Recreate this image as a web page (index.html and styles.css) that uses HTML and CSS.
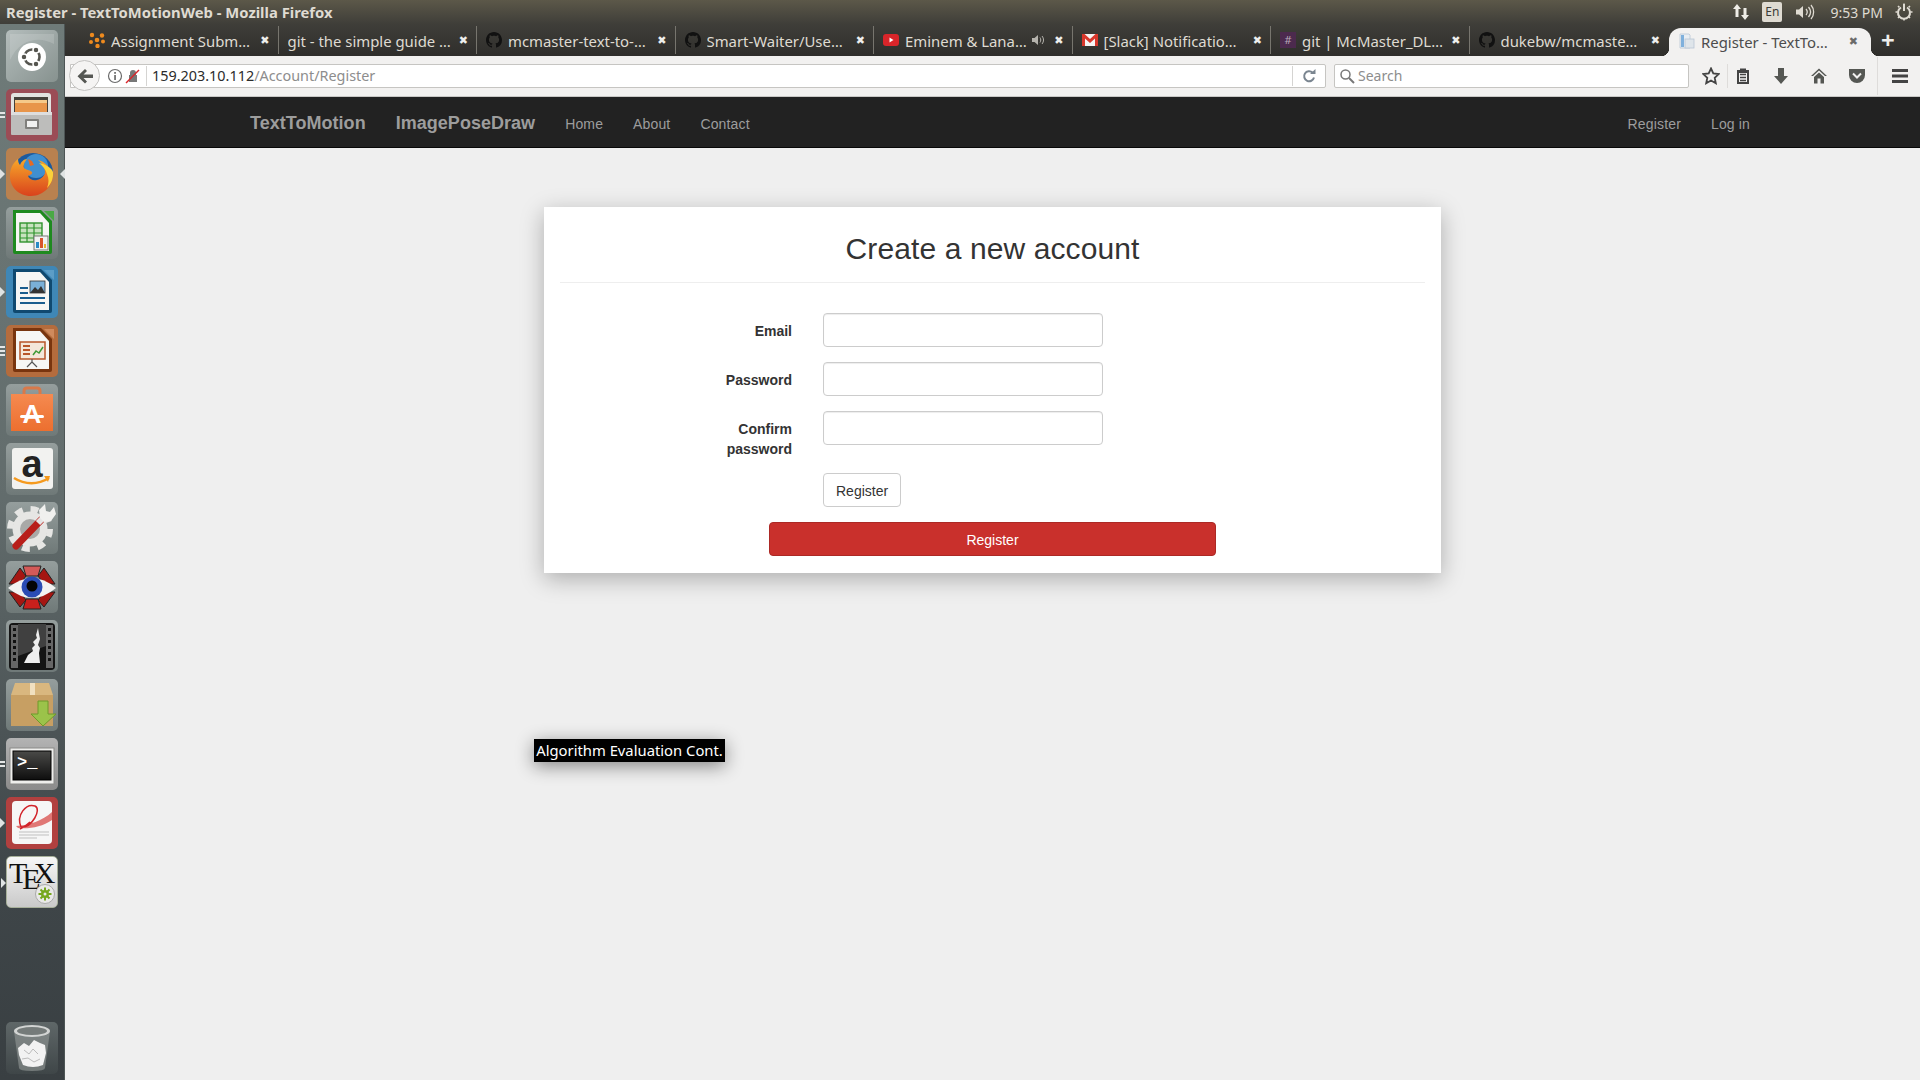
FILE: index.html
```html
<!DOCTYPE html>
<html lang="en">
<head>
  <meta charset="UTF-8">
  <meta name="viewport" content="width=device-width, initial-scale=1.0">
  <title>Register - TextToMotionWeb</title>
  <link rel="stylesheet" href="styles.css">
</head>
<body>

  <svg class="defs" width="0" height="0">
    <defs>
      <symbol id="github" viewBox="0 0 16 16">
        <path d="M8 0C3.58 0 0 3.58 0 8c0 3.54 2.29 6.53 5.47 7.59.4.07.55-.17.55-.38 0-.19-.01-.82-.01-1.49-2.01.37-2.53-.49-2.69-.94-.09-.23-.48-.94-.82-1.13-.28-.15-.68-.52-.01-.53.63-.01 1.08.58 1.23.82.72 1.21 1.87.87 2.33.66.07-.52.28-.87.51-1.07-1.78-.2-3.64-.89-3.64-3.95 0-.87.31-1.59.82-2.15-.08-.2-.36-1.02.08-2.12 0 0 .67-.21 2.2.82.64-.18 1.32-.27 2-.27.68 0 1.36.09 2 .27 1.53-1.04 2.2-.82 2.2-.82.44 1.1.16 1.92.08 2.12.51.56.82 1.27.82 2.15 0 3.07-1.87 3.75-3.65 3.95.29.25.54.73.54 1.48 0 1.07-.01 1.93-.01 2.2 0 .21.15.46.55.38A8.013 8.013 0 0016 8c0-4.42-3.58-8-8-8z" fill="#111"/>
      </symbol>
      <linearGradient id="ffOrange" x1="0" y1="0" x2="0" y2="1">
        <stop offset="0" stop-color="#f7a72a"/>
        <stop offset="1" stop-color="#d9421c"/>
      </linearGradient>
      <linearGradient id="bagOrange" x1="0" y1="0" x2="0" y2="1">
        <stop offset="0" stop-color="#f58a50"/>
        <stop offset="1" stop-color="#ec6f2f"/>
      </linearGradient>
      <linearGradient id="screenDark" x1="0" y1="0" x2="0" y2="1">
        <stop offset="0" stop-color="#4a4a48"/>
        <stop offset="1" stop-color="#0e0e0e"/>
      </linearGradient>
    </defs>
  </svg>

  <!-- Ubuntu panel -->
  <div class="panel">
    <span class="panel-title">Register - TextToMotionWeb - Mozilla Firefox</span>
    <div class="indicators">
      <svg class="ind-arrows" width="18" height="18" viewBox="0 0 18 18">
        <path d="M5 1l4 5H6.500v8h-3V6H1zM13 17l-4-5h2.500V5h3v7H17z" fill="#eeece6"/>
      </svg>
      <span class="ind-lang">En</span>
      <svg class="ind-volume" width="20" height="18" viewBox="0 0 20 18">
        <path d="M1 6.500h3L8 3v12l-4-3.500H1z" fill="#dfdbd2"/>
        <path d="M11 6c1.500 1.800 1.500 4.200 0 6M13.500 4c2.500 3 2.500 7 0 10M16 2c3.500 4 3.500 10 0 14" fill="none" stroke="#dfdbd2" stroke-width="1.300"/>
      </svg>
      <span class="ind-time">9:53 PM</span>
      <svg class="ind-power" width="18" height="18" viewBox="0 0 18 18">
        <path d="M6 4.500a6 6 0 1 0 6 0" fill="none" stroke="#dfdbd2" stroke-width="2"/>
        <path d="M9 1v7" stroke="#dfdbd2" stroke-width="2"/>
        <path d="M9 .5v2M9 15.500v2M.500 9h2M15.500 9h2M3 3l1.400 1.400M15 3l-1.400 1.400M3 15l1.400-1.400M15 15l-1.400-1.400" stroke="#dfdbd2" stroke-width="1.600"/>
      </svg>
    </div>
  </div>

  <div class="desktop">

    <!-- Launcher -->
    <div class="launcher">

      <div class="tile tile-dash">
        <svg viewBox="0 0 52 52">
          <path d="M4 30C14 8 34 6 48 14V4H4z" fill="#fff" opacity=".15"/>
          <circle cx="26" cy="27" r="14" fill="#fff"/>
          <circle cx="26" cy="27" r="7.500" fill="none" stroke="#55554f" stroke-width="2.600"/>
          <circle cx="30" cy="20" r="3" fill="#55554f" stroke="#fff" stroke-width="1.500"/>
          <circle cx="30" cy="34" r="3" fill="#55554f" stroke="#fff" stroke-width="1.500"/>
          <circle cx="18" cy="27" r="3" fill="#55554f" stroke="#fff" stroke-width="1.500"/>
        </svg>
      </div>

      <div class="tile tile-files">
        <span class="pip pip-double"></span>
        <svg viewBox="0 0 52 52">
          <path d="M5 7q0-3 3-3h34q3 0 3 3v16H5z" fill="#e2e2e0"/>
          <rect x="8" y="8" width="34" height="15" fill="#45403a"/>
          <rect x="9" y="11" width="32" height="3" fill="#f5c98a"/>
          <rect x="9" y="14" width="32" height="9" fill="#e8954a"/>
          <rect x="5" y="23" width="41" height="23" rx="1" fill="#bdbdbb"/>
          <rect x="5" y="23" width="41" height="3" fill="#dedede"/>
          <rect x="19" y="30" width="14" height="10" rx="1" fill="#807f7c"/>
          <rect x="21" y="32" width="10" height="6" fill="#f1f1f0"/>
        </svg>
      </div>

      <div class="tile tile-firefox">
        <span class="pip pip-arrow"></span>
        <span class="pip pip-arrow-right"></span>
        <svg viewBox="0 0 52 52">
          <circle cx="27" cy="25" r="20" fill="#1c5a9e"/>
          <circle cx="30" cy="18" r="12" fill="#3f8fd0"/>
          <path d="M47 24c1 13-9 24-22 24C12 48 3 38 4 26c.5-7 4-12 8-15 0 3 1 5 2 6 1-3 4-6 7-6-3 4-4 7-3 9 2 2 6 2 8 4 1 2-2 3-4 4 1 3 5 5 9 4 5-1 8-5 8-8 0-5-3-9-7-12 6 1 14 8 15 16z" fill="url(#ffOrange)"/>
          <path d="M47 24c.5 7-2 12-6 16 2-5 2-9 0-14-1-4-4-8-8-11 6 1 13 5 14 9z" fill="#fbd13a"/>
          <path d="M22 11l4 2 2 4-4 1z" fill="#e66a24"/>
        </svg>
      </div>

      <div class="tile tile-grey">
        <svg viewBox="0 0 52 52">
          <path d="M38 4h10v10z" fill="#49a945"/>
          <path d="M7 3h28l11 11v31q0 2-2 2H9q-2 0-2-2z" fill="#1e8a1f"/>
          <path d="M10 6h24l9 10v28H10z" fill="#f6f6f4"/>
          <rect x="14" y="16" width="22" height="19" fill="#c8e2bf" stroke="#2f932d" stroke-width="1.400"/>
          <path d="M14 21h22M14 26h22M14 31h22M21 16v19M28 16v19" stroke="#2f932d" stroke-width="1.200"/>
          <rect x="28" y="29" width="14" height="14" fill="#f2f2f2" stroke="#777"/>
          <rect x="30" y="35" width="3" height="6" fill="#2b8ac6"/>
          <rect x="34" y="31" width="3" height="10" fill="#d9532b"/>
          <rect x="38" y="37" width="2" height="4" fill="#e7b92e"/>
        </svg>
      </div>

      <div class="tile tile-writer">
        <span class="pip pip-arrow"></span>
        <svg viewBox="0 0 52 52">
          <path d="M38 4h10v10z" fill="#5c9dc7"/>
          <path d="M7 3h28l11 11v31q0 2-2 2H9q-2 0-2-2z" fill="#10496f"/>
          <path d="M10 6h24l9 10v28H10z" fill="#f6f6f4"/>
          <rect x="14" y="21" width="8" height="2" fill="#1a5d8e"/>
          <rect x="14" y="26" width="8" height="2" fill="#1a5d8e"/>
          <rect x="14" y="31" width="25" height="2" fill="#1a5d8e"/>
          <rect x="14" y="36" width="25" height="2" fill="#1a5d8e"/>
          <rect x="24" y="15" width="15" height="12" fill="#7ab0d8" stroke="#333" stroke-width=".8"/>
          <path d="M24 27l5-6 3 3 3-4 4 7z" fill="#333"/>
        </svg>
      </div>

      <div class="tile tile-impress">
        <span class="pip pip-triple"></span>
        <svg viewBox="0 0 52 52">
          <path d="M38 4h10v10z" fill="#cf8a5d"/>
          <path d="M7 3h28l11 11v31q0 2-2 2H9q-2 0-2-2z" fill="#78350f"/>
          <path d="M10 6h24l9 10v28H10z" fill="#f6f6f4"/>
          <rect x="14" y="17" width="25" height="17" fill="#f4e7da" stroke="#b8562a" stroke-width="1.500"/>
          <rect x="17" y="20" width="7" height="2" fill="#b8562a"/>
          <rect x="17" y="24" width="7" height="2" fill="#b8562a"/>
          <rect x="17" y="28" width="7" height="2" fill="#b8562a"/>
          <path d="M27 30l3-4 3 2 4-6" fill="none" stroke="#3d9a35" stroke-width="1.500"/>
          <path d="M26 34v3l-5 5M26 37l5 5" fill="none" stroke="#555" stroke-width="1.200"/>
        </svg>
      </div>

      <div class="tile tile-grey">
        <svg viewBox="0 0 52 52">
          <path d="M18 14V7q0-3 3-3h10q3 0 3 3v7" fill="none" stroke="#d8794a" stroke-width="3"/>
          <path d="M5 10h42v37H5z" fill="url(#bagOrange)"/>
          <text x="26" y="39" class="soft-letter">A</text>
          <rect x="14" y="31" width="24" height="3" rx="1.500" fill="#fff"/>
        </svg>
      </div>

      <div class="tile tile-grey">
        <svg viewBox="0 0 52 52">
          <rect x="6" y="5" width="41" height="41" rx="3" fill="#f2f2f0"/>
          <text x="26" y="34" class="amazon-letter">a</text>
          <path d="M8 35c11 7 24 7 35 0" fill="none" stroke="#f59a1e" stroke-width="2.500"/>
          <path d="M38 33l6 0-2 6z" fill="#f59a1e"/>
        </svg>
      </div>

      <div class="tile tile-grey">
        <svg viewBox="0 0 52 52">
          <circle cx="24" cy="27" r="20" fill="none" stroke="#e6e6e4" stroke-width="6" stroke-dasharray="7.850 7.850"/>
          <circle cx="24" cy="27" r="17.500" fill="#e6e6e4"/>
          <circle cx="24" cy="27" r="10" fill="#a9a9a7"/>
          <path d="M10 44l25-26" stroke="#b81f1a" stroke-width="7" stroke-linecap="round"/>
          <path d="M32 21l6-6" stroke="#e5e5e5" stroke-width="6"/>
          <path d="M34 16l-1-8 6-6 1 7 4 1 4-5 2 7-5 7-7 1z" fill="#f0f0ee"/>
        </svg>
      </div>

      <div class="tile tile-grey">
        <svg viewBox="0 0 52 52">
          <path d="M17 5h18l-3 10H20z" fill="#d45a58" stroke="#222"/>
          <path d="M14 7l-11 16h11l6-8z" fill="#a51612" stroke="#222"/>
          <path d="M38 7l11 16H38l-6-8z" fill="#a51612" stroke="#222"/>
          <path d="M14 31H3l11 15 6-7z" fill="#a51612" stroke="#222"/>
          <path d="M38 31h11L38 46l-6-7z" fill="#a51612" stroke="#222"/>
          <path d="M20 38h12l3 10H17z" fill="#c9201c" stroke="#222"/>
          <path d="M2 27q24-20 48 0q-24 20-48 0z" fill="#f2f2f2"/>
          <circle cx="26" cy="26" r="10.500" fill="#2a4cb4"/>
          <circle cx="26" cy="25" r="5.500" fill="#050505"/>
        </svg>
      </div>

      <div class="tile tile-grey">
        <svg viewBox="0 0 52 52">
          <rect x="3" y="3" width="46" height="47" rx="4" fill="#141414"/>
          <path d="M12 4h28v22L12 36z" fill="#5e5e5e" opacity=".6"/>
          <rect x="5" y="5" width="7" height="43" fill="#666"/>
          <rect x="40" y="5" width="7" height="43" fill="#666"/>
          <path d="M7 8h3v3H7zM7 14h3v3H7zM7 20h3v3H7zM7 26h3v3H7zM7 32h3v3H7zM7 38h3v3H7zM42 8h3v3h-3zM42 14h3v3h-3zM42 20h3v3h-3zM42 26h3v3h-3zM42 32h3v3h-3zM42 38h3v3h-3z" fill="#111"/>
          <path d="M32 8l-2 7 1 3-4 4 2 3-3 3 1 3-5 4-4 8h16l-1-10 1-5-2-3 2-6-1-5z" fill="#eee"/>
        </svg>
      </div>

      <div class="tile tile-grey">
        <svg viewBox="0 0 52 52">
          <path d="M9 4h34l4 12v31H5V16z" fill="#d9b77f"/>
          <path d="M5 16h42v31H5z" fill="#c79f63"/>
          <rect x="24" y="4" width="5" height="12" fill="#f1e0c0"/>
          <path d="M32 22h10v13h8L37 47 25 35h7z" fill="#9bc34a" stroke="#6f9a2a"/>
        </svg>
      </div>

      <div class="tile tile-terminal">
        <span class="pip pip-double"></span>
        <svg viewBox="0 0 52 52">
          <rect x="4" y="10" width="44" height="36" fill="#eeeeec" stroke="#8a8a88"/>
          <rect x="7" y="13" width="38" height="29" fill="url(#screenDark)" stroke="#000"/>
          <text x="11" y="29" class="term-prompt">&gt;_</text>
        </svg>
      </div>

      <div class="tile tile-evince">
        <span class="pip pip-arrow"></span>
        <svg viewBox="0 0 52 52">
          <rect x="6" y="4" width="40" height="43" rx="4" fill="#f6f6f6"/>
          <path d="M46 15C36 24 24 28 10 29l2 2c12 1 24-1 34-8z" fill="#e07775"/>
          <path d="M15 30C10 18 20 6 29 9c7 3-3 22-14 21M14 32c4-2 8-5 10-7" fill="none" stroke="#d2232a" stroke-width="1.500"/>
          <path d="M13 35h30M13 38h30M13 41h18" stroke="#bfbfbf" stroke-width="1"/>
        </svg>
      </div>

      <div class="tile tile-tex">
        <span class="pip pip-arrow"></span>
        <svg viewBox="0 0 52 52">
          <text x="3" y="27" class="tex-big">T<tspan dx="-5" dy="6">E</tspan><tspan dx="-7" dy="-6">X</tspan></text>
          <circle cx="39" cy="38" r="9.500" fill="#e9e9e7" stroke="#aaa"/>
          <path d="M39 31.500v13M32.500 38h13M34.500 33.500l9 9M43.500 33.500l-9 9" stroke="#76a81c" stroke-width="2"/>
          <circle cx="39" cy="38" r="4" fill="#76a81c"/>
          <circle cx="39" cy="38" r="1.500" fill="#e9e9e7"/>
        </svg>
      </div>

      <div class="tile tile-trash">
        <svg viewBox="0 0 52 52">
          <path d="M8 9l5 37q0 3 13 3t13-3l5-37z" fill="#9aa09f" opacity=".55"/>
          <ellipse cx="26" cy="9" rx="18" ry="6" fill="#d2d4d3"/>
          <ellipse cx="26" cy="9" rx="15" ry="4" fill="#757b7a"/>
          <path d="M12 26l6-5 5 3 5-6 6 3 5 2 1 8-3 12q-10 4-20 0l-4-10z" fill="#f2f2f2"/>
          <path d="M18 28l5 4 4-5 5 5M16 37l6-1 6 4 6-3" fill="none" stroke="#bbb"/>
        </svg>
      </div>

    </div>

    <div class="browser">

      <!-- Tabs -->
      <div class="tabstrip">
        <div class="tab">
          <svg class="favicon" viewBox="0 0 16 16">
            <g fill="#ee8a1e">
              <circle cx="8" cy="8" r="2.300"/><circle cx="3" cy="3" r="2.200"/><circle cx="13" cy="3.500" r="2.200"/>
              <circle cx="2" cy="10" r="2"/><circle cx="14" cy="9.500" r="2"/><circle cx="8.500" cy="14" r="2.200"/>
            </g>
          </svg>
          <span class="tab-text">Assignment Subm…</span><span class="tab-close">✖</span>
        </div>
        <div class="tab">
          <span class="tab-text">git - the simple guide …</span><span class="tab-close">✖</span>
        </div>
        <div class="tab">
          <svg class="favicon"><use href="#github"/></svg>
          <span class="tab-text">mcmaster-text-to-…</span><span class="tab-close">✖</span>
        </div>
        <div class="tab">
          <svg class="favicon"><use href="#github"/></svg>
          <span class="tab-text">Smart-Waiter/Use…</span><span class="tab-close">✖</span>
        </div>
        <div class="tab">
          <svg class="favicon" viewBox="0 0 16 16">
            <rect y="2" width="16" height="12" rx="3" fill="#d9252a"/>
            <path d="M6.500 5.500l4 2.500-4 2.500z" fill="#fff"/>
          </svg>
          <span class="tab-text">Eminem &amp; Lana…</span>
          <svg class="tab-audio" width="14" height="14" viewBox="0 0 14 14">
            <path d="M1 5h2.500L7 2v10L3.500 9H1z" fill="#b5b3ad"/>
            <path d="M9 4.500c1 1.500 1 3.500 0 5M11 3c2 2.500 2 5.500 0 8" fill="none" stroke="#b5b3ad"/>
          </svg>
          <span class="tab-close">✖</span>
        </div>
        <div class="tab">
          <svg class="favicon" viewBox="0 0 16 16">
            <rect y="2" width="16" height="12" fill="#f4f4f4"/>
            <path d="M0 2h2.500L8 7l5.500-5H16v12h-3V6.500L8 11 3 6.500V14H0z" fill="#d8372c"/>
          </svg>
          <span class="tab-text">[Slack] Notificatio…</span><span class="tab-close">✖</span>
        </div>
        <div class="tab">
          <span class="favicon favicon-slack">#</span>
          <span class="tab-text">git | McMaster_DL…</span><span class="tab-close">✖</span>
        </div>
        <div class="tab tab-last">
          <svg class="favicon"><use href="#github"/></svg>
          <span class="tab-text">dukebw/mcmaste…</span><span class="tab-close">✖</span>
        </div>
        <div class="tab tab-active">
          <svg class="favicon" viewBox="0 0 16 16">
            <path d="M1 1h9l1 1v13H1z" fill="#e9eef3" stroke="#b8c6d4" stroke-width=".8"/>
            <rect x="2" y="2" width="3" height="12" fill="#7fb0dc"/>
            <rect x="6" y="6" width="9" height="9" fill="#dfe5ea" stroke="#b8c6d4" stroke-width=".8"/>
          </svg>
          <span class="tab-text">Register - TextTo…</span><span class="tab-close">✖</span>
        </div>
        <span class="tab-new">+</span>
      </div>

      <!-- Toolbar -->
      <div class="toolbar">
        <div class="back-button">
          <svg width="18" height="18" viewBox="0 0 18 18">
            <path d="M9 2l2 2-3.500 3.500H17v3.500H7.500L11 14.500l-2 2L1.500 9.200z" fill="#555753"/>
          </svg>
        </div>
        <div class="urlbar">
          <svg class="url-info" width="16" height="16" viewBox="0 0 16 16">
            <circle cx="8" cy="8" r="6.500" fill="none" stroke="#6b6b6b" stroke-width="1.200"/>
            <rect x="7.200" y="7" width="1.700" height="5" fill="#6b6b6b"/>
            <rect x="7.200" y="4" width="1.700" height="1.800" fill="#6b6b6b"/>
          </svg>
          <svg class="url-lock" width="16" height="16" viewBox="0 0 16 16">
            <path d="M5 7V5a3 3 0 0 1 6 0v2h1v7H4V7z" fill="#777"/>
            <path d="M1 15L14 2" stroke="#d9252a" stroke-width="1.500"/>
          </svg>
          <span class="url-sep"></span>
          <span class="url-text"><span class="url-host">159.203.10.112</span>/Account/Register</span>
          <span class="url-sep url-sep-end"></span>
          <svg class="url-reload" width="16" height="16" viewBox="0 0 16 16">
            <path d="M13 9.500a5 5 0 1 1-1.500-5" fill="none" stroke="#7a8590" stroke-width="2"/>
            <path d="M9 6h5.500V1z" fill="#7a8590"/>
          </svg>
        </div>
        <div class="searchbar">
          <svg width="16" height="16" viewBox="0 0 16 16">
            <circle cx="6.500" cy="6.500" r="4.500" fill="none" stroke="#777" stroke-width="1.500"/>
            <path d="M10 10l5 5" stroke="#777" stroke-width="2"/>
          </svg>
          <span>Search</span>
        </div>
        <div class="tool-icons">
          <svg class="tool-star" width="18" height="18" viewBox="0 0 18 18">
            <path d="M9 1.500l2.300 5 5.400.6-4 3.700 1.100 5.400L9 13.500l-4.800 2.700 1.100-5.400-4-3.700 5.400-.6z" fill="none" stroke="#444" stroke-width="1.800"/>
          </svg>
          <span class="tool-sep"></span>
          <svg class="tool-clip" width="16" height="18" viewBox="0 0 16 18">
            <path d="M5 3V1.500h6V3h3v14H2V3z" fill="#444"/>
            <path d="M4 6h8v9H4z" fill="#f2f1f0"/>
            <path d="M5 7.500h6M5 10.500h6M5 13.500h6" stroke="#444" stroke-width="1.500"/>
          </svg>
          <svg class="tool-down" width="16" height="18" viewBox="0 0 16 18">
            <path d="M5 1h6v8h4l-7 8-7-8h4z" fill="#555753"/>
          </svg>
          <svg class="tool-home" width="18" height="18" viewBox="0 0 18 18">
            <path d="M9 1.500L1 9h2l6-5.500L15 9h2z" fill="#555753"/>
            <path d="M9 5.500L4 10v6.500h3.500v-5h3v5H14V10z" fill="#555753"/>
          </svg>
          <svg class="tool-pocket" width="18" height="18" viewBox="0 0 18 18">
            <path d="M1 2h16v6a8 8 0 0 1-16 0z" fill="#555753"/>
            <path d="M5 6.500l4 4 4-4" fill="none" stroke="#f2f1f0" stroke-width="2"/>
          </svg>
          <span class="tool-sep tool-sep-menu"></span>
          <svg class="tool-menu" width="18" height="16" viewBox="0 0 18 16">
            <path d="M1 1h16v3H1zM1 6.500h16v3H1zM1 12h16v3H1z" fill="#444"/>
          </svg>
        </div>
      </div>

      <!-- Site navbar -->
      <nav class="navbar">
        <a class="brand">TextToMotion</a>
        <a class="brand">ImagePoseDraw</a>
        <a>Home</a>
        <a>About</a>
        <a>Contact</a>
        <span class="nav-spacer"></span>
        <a>Register</a>
        <a>Log in</a>
      </nav>

      <!-- Page content -->
      <div class="content">
        <div class="card">
          <h2>Create a new account</h2>
          <hr>
          <form class="register-form">
            <div class="form-row">
              <label class="form-label">Email</label>
              <input class="form-input" type="text">
            </div>
            <div class="form-row">
              <label class="form-label">Password</label>
              <input class="form-input" type="password">
            </div>
            <div class="form-row">
              <label class="form-label">Confirm password</label>
              <input class="form-input" type="password">
            </div>
            <div class="form-row">
              <span class="form-label form-label-empty"></span>
              <button class="btn" type="button">Register</button>
            </div>
          </form>
          <button class="btn btn-red" type="button">Register</button>
        </div>
      </div>

    </div>
  </div>

  <div class="tooltip">Algorithm Evaluation Cont.</div>

</body>
</html>
```

FILE: styles.css
```css
* {
  box-sizing: border-box;
}

html, body {
  height: 100%;
  margin: 0;
  overflow: hidden;
}

body {
  font-family: "Liberation Sans", Arial, sans-serif;
  font-size: 14px;
  color: #333;
  background-color: #efefef;
}

.defs {
  position: absolute;
}

/* Ubuntu panel */
.panel {
  display: flex;
  align-items: center;
  justify-content: space-between;
  height: 24px;
  padding: 0 6px;
  background: linear-gradient(#5c5849, #3f3e39);
  color: #dfdbd2;
  font-family: "Noto Sans", sans-serif;
}

.panel-title {
  font-size: 14.8px;
  font-weight: 700;
}

.indicators {
  display: flex;
  align-items: center;
}

.ind-lang {
  width: 20px;
  height: 20px;
  margin: 0 13px 0 12px;
  border-radius: 2px;
  background-color: #dfdbd2;
  color: #3c3b37;
  font-size: 12px;
  line-height: 20px;
  text-align: center;
}

.ind-time {
  margin: 0 12px 0 15px;
  font-size: 14px;
}

.ind-power {
  margin-right: 1px;
}

/* Launcher */
.desktop {
  display: flex;
  height: 1056px;
}

.launcher {
  display: flex;
  flex-direction: column;
  flex: none;
  width: 65px;
  padding: 6px 7px 0 6px;
  gap: 7px;
  background: linear-gradient(#6f7b79 0, #626c6c 45%, #3f4649 80%, #393f42 100%);
  border-right: 1px solid #4d5555;
}

.tile {
  position: relative;
  flex: none;
  width: 52px;
  height: 52px;
  border-radius: 5px;
  background: linear-gradient(#959e9d, #6f7978);
}

.tile svg {
  display: block;
  width: 52px;
  height: 52px;
}

.tile-dash {
  background: linear-gradient(135deg, #b4bdbc, #87928f);
}

.tile-files {
  background: #9b4c56;
}

.tile-firefox {
  background: #b9814f;
}

.tile-writer {
  background: #3f87b6;
}

.tile-impress {
  background: #b46c3d;
}

.tile-terminal {
  background: linear-gradient(#b3b3b3, #8b8b8b);
}

.tile-evince {
  background: #b1403f;
}

.tile-tex {
  background: linear-gradient(#f7f7f7, #c9c9c9);
  border: 1px solid #a7b09a;
}

.tile-tex svg {
  margin: -1px;
}

.tile-trash {
  margin-top: 107px;
  background: linear-gradient(#5f6768, #3f4648);
}

.soft-letter {
  font-family: "Liberation Sans", sans-serif;
  font-size: 26px;
  font-weight: 700;
  fill: #fff;
  text-anchor: middle;
}

.amazon-letter {
  font-family: "Liberation Sans", sans-serif;
  font-size: 38px;
  font-weight: 700;
  fill: #222;
  text-anchor: middle;
}

.term-prompt {
  font-family: "Liberation Mono", monospace;
  font-size: 17px;
  font-weight: 700;
  fill: #fff;
}

.tex-big {
  font-family: "Liberation Serif", serif;
  font-size: 30px;
  fill: #111;
}

.pip {
  position: absolute;
}

.pip-arrow {
  top: 21px;
  left: -6px;
  border: 5px solid transparent;
  border-left-color: #dfe3e3;
  border-right-width: 0;
}

.pip-arrow-right {
  top: 21px;
  right: -7px;
  border: 5px solid transparent;
  border-right-color: #dfe3e3;
  border-left-width: 0;
}

.pip-double {
  top: 23px;
  left: -6px;
  width: 5px;
  height: 6px;
  border-top: 2px solid #e4e6e6;
  border-bottom: 2px solid #e4e6e6;
}

.pip-triple {
  top: 21px;
  left: -6px;
  width: 5px;
  height: 10px;
  border-top: 2px solid #e4e6e6;
  border-bottom: 2px solid #e4e6e6;
  background: linear-gradient(#e4e6e6, #e4e6e6) center / 100% 2px no-repeat;
}

/* Browser */
.browser {
  display: flex;
  flex-direction: column;
  flex: 1;
  min-width: 0;
}

.tabstrip {
  display: flex;
  align-items: flex-end;
  flex: none;
  height: 32px;
  padding-left: 15px;
  background: linear-gradient(#3f3e39, #2f2e2b);
  font-family: "Noto Sans", sans-serif;
  font-size: 14.9px;
  color: #dfdbd2;
}

.tab {
  display: flex;
  align-items: center;
  flex: none;
  width: 198.5px;
  height: 28px;
  margin-bottom: 2px;
  padding: 0 8px 0 9px;
  border-right: 1px solid #77756e;
  white-space: nowrap;
}

.tab-last {
  border-right: none;
}

.favicon {
  flex: none;
  width: 16px;
  height: 16px;
  margin-right: 6px;
}

.favicon-slack {
  background-color: #4c2a4e;
  color: #b8a8b8;
  font-size: 11px;
  line-height: 16px;
  text-align: center;
}

.tab-text {
  flex: 1;
  padding-top: 1px;
  overflow: hidden;
}

.tab-audio {
  flex: none;
  margin-right: 9px;
}

.tab-close {
  flex: none;
  font-family: "DejaVu Sans", sans-serif;
  font-size: 11px;
  color: #eeeeec;
}

.tab-active {
  position: relative;
  width: 202px;
  height: 28px;
  margin-left: 1px;
  margin-bottom: 0;
  padding: 0 13px 2px 10px;
  border-right: none;
  border-radius: 12px 12px 0 0;
  background-color: #f2f1f0;
  color: #4c4c4c;
}

.tab-active::before,
.tab-active::after {
  content: "";
  position: absolute;
  bottom: 0;
  width: 8px;
  height: 8px;
}

.tab-active::before {
  left: -8px;
  background: radial-gradient(circle at 0 0, transparent 8px, #f2f1f0 8.5px);
}

.tab-active::after {
  right: -8px;
  background: radial-gradient(circle at 100% 0, transparent 8px, #f2f1f0 8.5px);
}

.tab-active .tab-close {
  color: #6b6b6b;
}

.tab-new {
  margin: 0 0 1px 10px;
  font-size: 24px;
  font-weight: 700;
  line-height: 30px;
  color: #eeeeec;
}

/* Toolbar */
.toolbar {
  display: flex;
  align-items: center;
  flex: none;
  position: relative;
  height: 41px;
  padding: 0 0 1px 5px;
  background-color: #f2f1f0;
  border-bottom: 1px solid #c9c8c6;
  font-family: "Noto Sans", sans-serif;
  font-size: 14px;
}

.back-button {
  position: absolute;
  left: 4px;
  top: 4px;
  display: flex;
  align-items: center;
  justify-content: center;
  width: 31px;
  height: 31px;
  border: 1px solid #c4c3c1;
  border-radius: 50%;
  background-color: #f5f4f3;
  z-index: 1;
}

.urlbar {
  display: flex;
  align-items: center;
  flex: none;
  width: 1256px;
  height: 24px;
  padding: 0 8px 0 36px;
  background-color: #fff;
  border: 1px solid #c6c5c2;
  border-radius: 0 2px 2px 0;
}

.url-lock {
  margin-left: 2px;
}

.url-sep {
  width: 1px;
  height: 20px;
  margin: 0 5px 0 5px;
  background-color: #d5d4d2;
}

.url-sep-end {
  margin: 0 8px 0 0;
}

.url-text {
  flex: 1;
  font-size: 14.4px;
  color: #8d8d8d;
}

.url-host {
  color: #2b2b2b;
}

.searchbar {
  display: flex;
  align-items: center;
  flex: none;
  width: 355px;
  height: 24px;
  margin-left: 8px;
  padding-left: 4px;
  gap: 3px;
  background-color: #fff;
  border: 1px solid #c6c5c2;
  border-radius: 2px;
  color: #8d8d8d;
}

.tool-icons {
  display: flex;
  align-items: center;
  flex: 1;
  padding-left: 13px;
}

.tool-sep {
  width: 1px;
  height: 24px;
  margin: 0 7px;
  background-color: #dedcda;
}

.tool-down {
  margin-left: 22px;
}

.tool-home {
  margin-left: 21px;
}

.tool-pocket {
  margin-left: 20px;
}

.tool-sep-menu {
  height: 38px;
  margin: 0 13px 0 11px;
}

/* Site navbar */
.navbar {
  display: flex;
  align-items: center;
  flex: none;
  height: 51px;
  padding: 3px 155px 0 170px;
  background-color: #222222;
  border-bottom: 1px solid #080808;
}

.navbar a {
  padding: 0 15px;
  color: #9d9d9d;
  letter-spacing: 0.15px;
}

.navbar .brand {
  font-size: 18px;
  font-weight: 700;
  letter-spacing: 0.03px;
}

.nav-spacer {
  flex: 1;
}

/* Page content */
.content {
  flex: 1;
  padding-top: 59px;
  background-color: #efefef;
}

.card {
  width: 897px;
  margin: 0 auto;
  padding: 25px 16px 17px;
  background-color: #fff;
  box-shadow: 0 6px 22px rgba(0, 0, 0, 0.28);
}

.card h2 {
  margin: 0 0 17px;
  font-size: 30px;
  font-weight: 400;
  line-height: 33px;
  letter-spacing: 0.1px;
  text-align: center;
}

.card hr {
  height: 1px;
  margin: 0 0 30px;
  border: none;
  background-color: #eeeeee;
}

.register-form {
  padding-left: 132px;
}

.form-row {
  display: flex;
  gap: 31px;
  margin-bottom: 15px;
}

.form-label {
  flex: none;
  width: 100px;
  margin-bottom: -1px;
  padding-top: 8px;
  font-weight: 700;
  line-height: 20px;
  text-align: right;
}

.form-label-empty {
  padding-top: 0;
}

.form-input {
  width: 280px;
  height: 34px;
  padding: 6px 12px;
  background-color: #fff;
  border: 1px solid #cccccc;
  border-radius: 4px;
  box-shadow: inset 0 1px 1px rgba(0, 0, 0, 0.075);
}

.btn {
  height: 34px;
  padding: 7px 12px 5px;
  background-color: #fff;
  border: 1px solid #cccccc;
  border-radius: 4px;
  color: #333;
  font-family: inherit;
  font-size: 14px;
  line-height: 20px;
}

.btn-red {
  display: block;
  width: 447px;
  margin: 0 auto;
  background-color: #c9302c;
  border-color: #ac2925;
  color: #fff;
}

/* Window tooltip, floats over the desktop */
.tooltip {
  position: absolute;
  left: 534px;
  top: 739px;
  width: 191px;
  height: 23px;
  background-color: #000;
  box-shadow: 0 4px 18px rgba(0, 0, 0, 0.45);
  color: #fff;
  font-family: "Noto Sans", sans-serif;
  font-size: 14.8px;
  line-height: 23px;
  text-align: center;
  white-space: nowrap;
}
```
